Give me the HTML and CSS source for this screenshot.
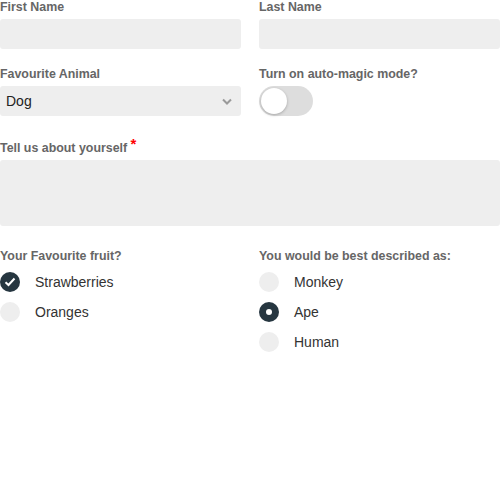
FILE: index.html
```html
<!DOCTYPE html>
<html>
<head>
<meta charset="utf-8">
<link rel="stylesheet" href="styles.css">
</head>
<body>
<form class="form">
  <div class="row">
    <div class="field">
      <label class="label">First Name</label>
      <div class="input"></div>
    </div>
    <div class="field">
      <label class="label">Last Name</label>
      <div class="input"></div>
    </div>
  </div>
  <div class="row row-b">
    <div class="field">
      <label class="label">Favourite Animal</label>
      <div class="input select">
        <span>Dog</span>
        <svg class="chev" width="10" height="7" viewBox="0 0 10 7"><path d="M1 1.5 L5 5.5 L9 1.5" fill="none" stroke="#9a9a9a" stroke-width="2"/></svg>
      </div>
    </div>
    <div class="field">
      <label class="label">Turn on auto-magic mode?</label>
      <div class="toggle"><div class="knob"></div></div>
    </div>
  </div>
  <div class="row-full row-c">
    <label class="label">Tell us about yourself <span class="req">*</span></label>
    <div class="textarea"></div>
  </div>
  <div class="row row-d">
    <div class="field">
      <label class="label">Your Favourite fruit?</label>
      <div class="opts">
        <div class="opt"><span class="dot on"><svg width="12" height="10" viewBox="0 0 12 10"><path d="M1.5 5.2 L4.5 8 L10.5 1.5" fill="none" stroke="#fff" stroke-width="2"/></svg></span>Strawberries</div>
        <div class="opt"><span class="dot"></span>Oranges</div>
      </div>
    </div>
    <div class="field">
      <label class="label">You would be best described as:</label>
      <div class="opts">
        <div class="opt"><span class="dot"></span>Monkey</div>
        <div class="opt"><span class="dot on"><span class="inner"></span></span>Ape</div>
        <div class="opt"><span class="dot"></span>Human</div>
      </div>
    </div>
  </div>
</form>
</body>
</html>
```

FILE: styles.css
```css
body {
  margin: 0;
  font-family: "Liberation Sans", Arial, sans-serif;
  color: #333;
  background: #fff;
}
.form {
  width: 500px;
}
.row {
  display: grid;
  grid-template-columns: 241px 241px;
  column-gap: 18px;
}
.row-b { margin-top: 18px; }
.row-c { margin-top: 25px; }
.row-d { margin-top: 23px; }
.label {
  display: block;
  font-size: 12.4px;
  font-weight: bold;
  line-height: 15px;
  color: #666;
  margin-bottom: 4px;
}
.req {
  color: #f00;
  font-size: 15px;
  line-height: 0;
  position: relative;
  top: -3px;
}
.input {
  height: 30px;
  background: #eee;
  border-radius: 3px;
}
.select {
  display: flex;
  align-items: center;
  justify-content: space-between;
  padding: 0 9px 0 6px;
  font-size: 14px;
  color: #222;
}
.toggle {
  width: 54px;
  height: 30px;
  border-radius: 15px;
  background: #ddd;
  display: flex;
  align-items: center;
  padding-left: 2px;
  box-sizing: border-box;
}
.knob {
  width: 26px;
  height: 26px;
  border-radius: 50%;
  background: #fff;
  box-shadow: 0 1px 3px rgba(0,0,0,0.25);
}
.textarea {
  height: 66px;
  background: #eee;
  border-radius: 3px;
}
.opts {
  display: flex;
  flex-direction: column;
  gap: 10px;
  margin-top: 8px;
}
.opt {
  display: flex;
  align-items: center;
  gap: 15px;
  height: 20px;
  font-size: 14px;
  color: #333;
}
.dot {
  width: 20px;
  height: 20px;
  border-radius: 50%;
  background: #eee;
  display: flex;
  align-items: center;
  justify-content: center;
  flex: none;
}
.dot.on {
  background: #263640;
}
.inner {
  width: 6px;
  height: 6px;
  border-radius: 50%;
  background: #fff;
}
```
